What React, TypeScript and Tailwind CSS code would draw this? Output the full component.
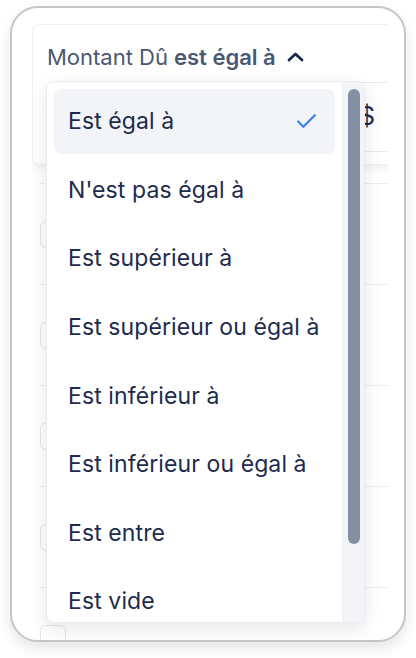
import { Check } from "lucide-react";

const options = [
  "Est égal à",
  "N'est pas égal à",
  "Est supérieur à",
  "Est supérieur ou égal à",
  "Est inférieur à",
  "Est inférieur ou égal à",
  "Est entre",
  "Est vide",
];

const rows = [0, 1, 2, 3, 4];

const App = () => {
  return (
    <div
      className="min-h-[658px] w-[416px] bg-white pl-[10px] pt-[6px]"
      style={{ fontFamily: "Inter, 'Noto Sans', sans-serif" }}
    >
      {/* device frame */}
      <div className="h-[636px] w-[396px] overflow-hidden rounded-[28px] border-2 border-[#c6c6c6] bg-white pl-[20px] pt-[16px] shadow-[0_6px_14px_rgba(0,0,0,0.10)]">
        <div className="w-[356px] overflow-hidden">
          {/* filter card */}
          <div className="relative w-[380px] rounded-lg border border-[#eef0f3] bg-white px-[14px] pb-[12px] pt-[18px] shadow-[0_2px_8px_rgba(15,23,42,0.08)]">
            <div className="mb-[11px] flex h-[28px] items-center text-[22px] text-[#4a5873]">
              <span>Montant Dû</span>
              <span className="ml-[6px] font-semibold">est égal à</span>
              <svg
                width="17"
                height="10"
                viewBox="0 0 17 10"
                className="ml-[11px]"
                fill="none"
                stroke="#1c2a4a"
                strokeWidth="2.8"
                strokeLinecap="round"
                strokeLinejoin="round"
              >
                <polyline points="2,8 8.5,2 15,8" />
              </svg>
            </div>
            <div className="flex h-[70px] items-center justify-end rounded-lg border border-[#e6e8ec] pr-[21px] text-[25px] text-[#1c2a4a]">
              $
            </div>

            {/* dropdown */}
            <div className="absolute left-[13px] top-[56px] z-10 flex h-[542px] w-[319px] overflow-hidden rounded-lg border border-[#e9ebef] bg-white shadow-[0_6px_18px_rgba(15,23,42,0.10)]">
              <div className="flex flex-1 flex-col gap-[3.6px] p-[7px]">
                {options.map((o, i) => (
                  <div
                    key={o}
                    className={
                      "flex h-[65px] shrink-0 items-center justify-between whitespace-nowrap rounded-lg pl-[14px] pr-[16px] text-[23px] tracking-[0.1px] text-[#1d2b4d] " +
                      (i === 0 ? "bg-[#f3f4f8]" : "")
                    }
                  >
                    <span>{o}</span>
                    {i === 0 && <Check size={25} strokeWidth={2.2} color="#3b82f6" />}
                  </div>
                ))}
              </div>
              <div className="w-[22px] shrink-0 bg-[#f3f4f8] pl-[6px] pr-[4px] pt-[7px]">
                <div className="h-[455px] w-[12px] rounded-full bg-[#858fa3]" />
              </div>
            </div>
          </div>

          {/* rows behind */}
          <div className="mt-[18px] pl-[8px]">
            {rows.map((r) => (
              <div
                key={r}
                className="flex h-[101px] items-center border-t border-[#eceef2]"
              >
                <div className="h-[27px] w-[26px] rounded-md border border-[#e3e5ea] bg-white" />
              </div>
            ))}
          </div>
        </div>
      </div>
    </div>
  );
};

export default App;
